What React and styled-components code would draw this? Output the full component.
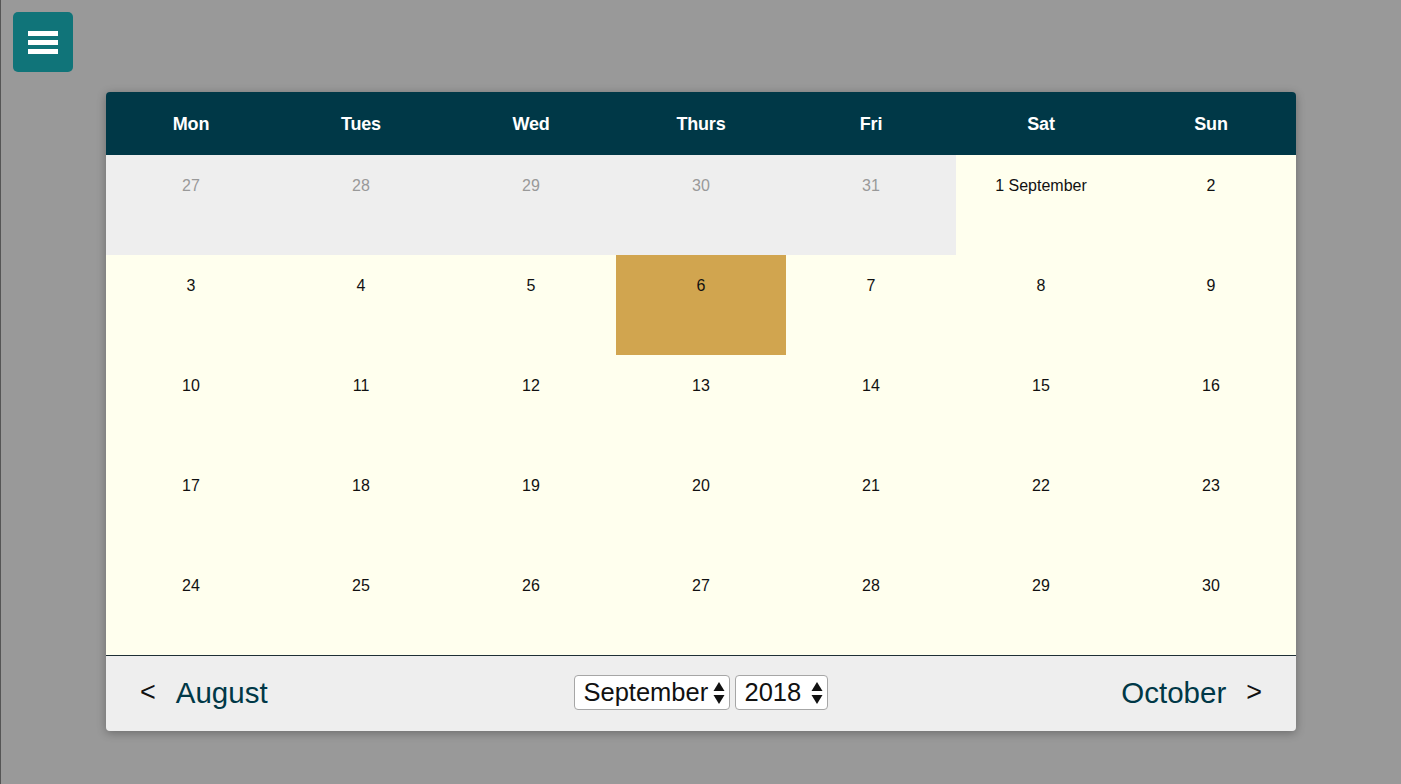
import styled, { createGlobalStyle } from 'styled-components'

const GlobalStyle = createGlobalStyle`
  html, body {
    margin: 0;
    padding: 0;
    background: #999999;
    font-family: "Liberation Sans", Arial, Helvetica, sans-serif;
  }
  body {
    border-left: 1px solid #555;
    min-height: 784px;
    box-sizing: border-box;
  }
`

const days = ['Mon', 'Tues', 'Wed', 'Thurs', 'Fri', 'Sat', 'Sun']

function buildWeeks() {
  const cells = []
  for (let d = 27; d <= 31; d++) cells.push({ label: String(d), muted: true })
  for (let d = 1; d <= 30; d++) {
    cells.push({ label: d === 1 ? '1 September' : String(d), today: d === 6 })
  }
  return cells
}

function Arrows() {
  return (
    <svg width="12" height="24" viewBox="0 0 12 24">
      <path d="M6 1 L11.5 10 H0.5 Z" fill="#111" />
      <path d="M6 23 L11.5 14 H0.5 Z" fill="#111" />
    </svg>
  )
}

export default function App() {
  const cells = buildWeeks()
  return (
    <Page>
      <GlobalStyle />
      <MenuButton aria-label="menu">
        <span />
        <span />
        <span />
      </MenuButton>

      <Calendar>
        <Header>
          {days.map((d) => (
            <DayName key={d}>{d}</DayName>
          ))}
        </Header>
        <Grid>
          {cells.map((c, i) => (
            <Cell key={i} $muted={c.muted} $today={c.today}>
              {c.label}
            </Cell>
          ))}
        </Grid>
        <Footer>
          <NavLink>
            <Chevron>&lt;</Chevron>
            <MonthName>August</MonthName>
          </NavLink>
          <Pickers>
            <SelectBox $width={156}>
              <span>September</span>
              <Arrows />
            </SelectBox>
            <SelectBox $width={93}>
              <span>2018</span>
              <Arrows />
            </SelectBox>
          </Pickers>
          <NavLink>
            <MonthName>October</MonthName>
            <Chevron>&gt;</Chevron>
          </NavLink>
        </Footer>
      </Calendar>
    </Page>
  )
}

const Page = styled.div`
  padding: 12px 0 0 12px;
  height: 784px;
  box-sizing: border-box;
`

const MenuButton = styled.button`
  width: 60px;
  height: 60px;
  border: none;
  border-radius: 5px;
  background: #107479;
  display: flex;
  flex-direction: column;
  justify-content: center;
  align-items: center;
  gap: 4px;
  padding: 0;
  cursor: pointer;

  span {
    display: block;
    width: 30px;
    height: 5px;
    background: #fff;
  }
`

const Calendar = styled.div`
  width: 1190px;
  margin: 20px 0 0 93px;
  border-radius: 4px;
  overflow: hidden;
  box-shadow: 0 2px 10px rgba(0, 0, 0, 0.3);
`

const Header = styled.div`
  display: grid;
  grid-template-columns: repeat(7, 1fr);
  height: 63px;
  background: #003847;
  align-items: center;
`

const DayName = styled.div`
  text-align: center;
  color: #fff;
  font-size: 18px;
  font-weight: bold;
  letter-spacing: -0.2px;
  padding-top: 2px;
`

const Grid = styled.div`
  display: grid;
  grid-template-columns: repeat(7, 1fr);
  grid-auto-rows: 100px;
  background: #ffffee;
`

const Cell = styled.div`
  text-align: center;
  padding-top: 22px;
  font-size: 16px;
  line-height: 18px;
  color: ${(p) => (p.$muted ? '#999' : '#111')};
  background: ${(p) => (p.$muted ? '#eeeeee' : p.$today ? '#d1a54f' : 'transparent')};
  box-sizing: border-box;
`

const Footer = styled.div`
  height: 76px;
  border-top: 1px solid #1e2f36;
  background: #eeeeee;
  display: flex;
  align-items: center;
  justify-content: space-between;
  padding: 0 34px 2px 34px;
  box-sizing: border-box;
`

const NavLink = styled.div`
  display: flex;
  align-items: center;
  gap: 20px;
  font-size: 29.5px;
`

const Chevron = styled.span`
  color: #111;
  font-size: 27px;
`

const MonthName = styled.span`
  color: #003847;
`

const Pickers = styled.div`
  display: flex;
  gap: 5px;
  margin-left: 14px;
`

const SelectBox = styled.div`
  width: ${(p) => p.$width}px;
  height: 35px;
  box-sizing: border-box;
  border: 1px solid #a6a6a6;
  border-radius: 4px;
  background: #fff;
  display: flex;
  align-items: center;
  justify-content: space-between;
  padding: 0 4px 0 8px;
  font-size: 25.5px;
  color: #111;
`
